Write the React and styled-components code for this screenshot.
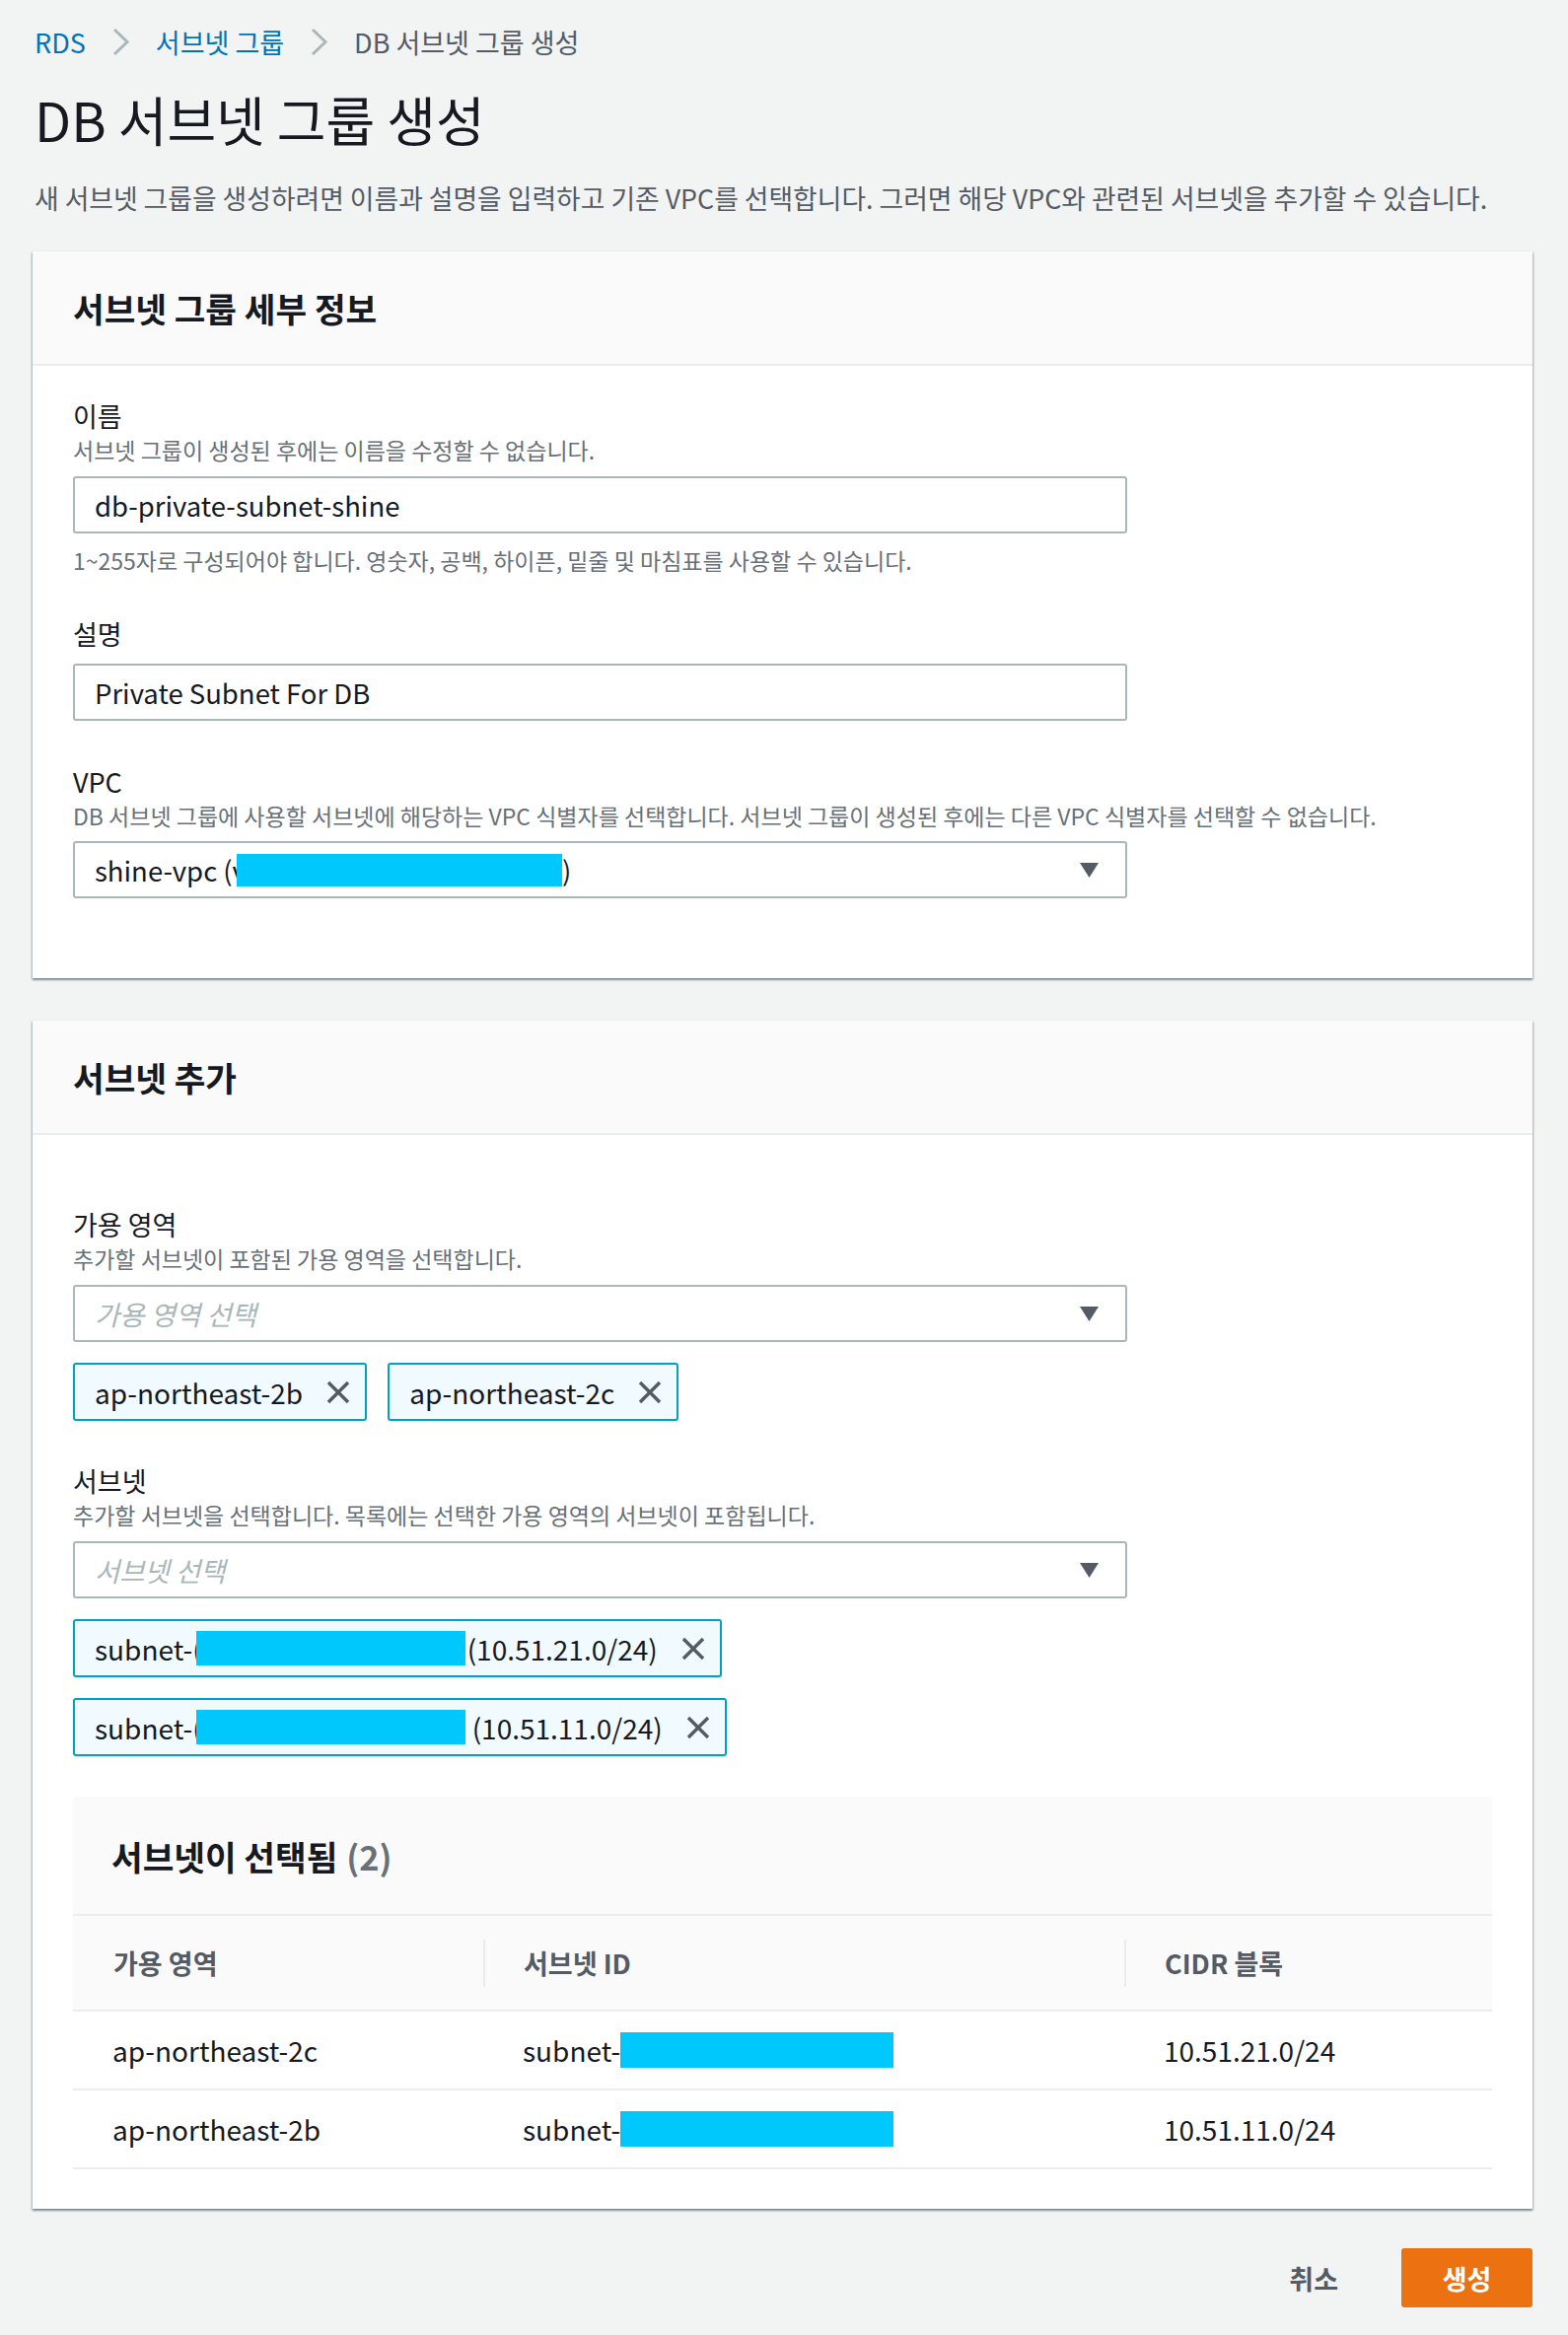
import React from 'react';
import styled, { createGlobalStyle } from 'styled-components';

const GlobalStyle = createGlobalStyle`
  html, body {
    margin: 0;
    padding: 0;
    background: #f2f3f3;
  }
  body {
    font-family: "Noto Sans CJK KR", "Noto Sans", sans-serif;
    color: #16191f;
  }
`;

const Page = styled.div`
  padding: 0 36px 27px 33px;
`;

const Breadcrumbs = styled.nav`
  height: 84px;
  display: flex;
  align-items: center;
  gap: 26px;
  padding-left: 2px;
  font-size: 27px;
`;

const Crumb = styled.span`
  color: ${({ $current }) => ($current ? '#545b64' : '#0073bb')};
`;

const Title = styled.h1`
  margin: 7px 0 0 2px;
  font-size: 54px;
  font-weight: 400;
  line-height: 60px;
`;

const PageDesc = styled.p`
  margin: 32px 0 0 2px;
  font-size: 26.8px;
  line-height: 36px;
  color: #545b64;
`;

const Panel = styled.section`
  margin-top: ${({ $top }) => $top}px;
  background: #fff;
  box-shadow: 0 2px 2px 0 rgba(0, 28, 36, 0.35), 1px 1px 2px 0 rgba(0, 28, 36, 0.18),
    -1px 1px 2px 0 rgba(0, 28, 36, 0.18);
`;

const PanelHeader = styled.header`
  box-sizing: border-box;
  height: 116px;
  display: flex;
  align-items: center;
  padding: 0 41px;
  background: #fafafa;
  border-bottom: 2px solid #eaeded;
`;

const PanelTitle = styled.h2`
  margin: 0;
  font-size: 34.4px;
  font-weight: 700;
  color: #16191f;
`;

const PanelBody = styled.div`
  padding: ${({ $top }) => $top}px 41px ${({ $bottom }) => $bottom}px;
`;

const Field = styled.div`
  margin-top: ${({ $top }) => $top || 0}px;
`;

const Label = styled.div`
  font-size: 27px;
  line-height: 34px;
  color: #16191f;
`;

const Help = styled.div`
  font-size: 23px;
  line-height: 34px;
  color: #687078;
  margin-top: ${({ $top }) => $top || 0}px;
`;

const Control = styled.div`
  box-sizing: border-box;
  width: 1069px;
  height: 58px;
  margin-top: ${({ $top }) => $top}px;
  display: flex;
  align-items: center;
  justify-content: space-between;
  padding: 0 27px 0 20px;
  border: 2px solid #aab7b8;
  border-radius: 3px;
  background: #fff;
  font-size: 27.5px;
  color: #16191f;
`;

const Value = styled.span`
  display: inline-flex;
  align-items: center;
  white-space: nowrap;
`;

const Placeholder = styled.span`
  font-style: italic;
  color: #aab7b8;
`;

const Redact = styled.span`
  display: inline-block;
  width: ${({ $w }) => $w}px;
  height: ${({ $h }) => $h}px;
  margin-left: ${({ $ml }) => $ml || 0}px;
  margin-right: ${({ $mr }) => $mr || 0}px;
  background: #00c8fc;
`;

const TokenRow = styled.div`
  margin-top: 21px;
  display: flex;
  gap: 21px;
`;

const TokenStack = styled.div`
  margin-top: 21px;
  display: flex;
  flex-direction: column;
  align-items: flex-start;
  gap: 21px;
`;

const Token = styled.div`
  box-sizing: border-box;
  height: 59px;
  display: inline-flex;
  align-items: center;
  gap: 23px;
  padding: 0 14px 0 20px;
  border: 2px solid #00a1c9;
  border-radius: 3px;
  background: #f1faff;
  font-size: 28px;
  color: #16191f;
  white-space: nowrap;
`;

const Table = styled.div`
  margin-top: 41px;
`;

const TableHead = styled.div`
  box-sizing: border-box;
  height: 119px;
  display: flex;
  align-items: center;
  padding-left: 39px;
  background: #fafafa;
  font-size: 34.4px;
  font-weight: 700;
`;

const Count = styled.span`
  margin-left: 9px;
  color: #687078;
`;

const Row = styled.div`
  box-sizing: border-box;
  display: grid;
  grid-template-columns: 416px 650px 1fr;
  height: ${({ $h }) => $h}px;
  border-top: ${({ $head }) => ($head ? '2px solid #eaeded' : 'none')};
  border-bottom: 2px solid #eaeded;
  background: ${({ $head }) => ($head ? '#fafafa' : '#fff')};
`;

const HeadCell = styled.div`
  position: relative;
  display: flex;
  align-items: center;
  padding-left: 41px;
  font-size: 27px;
  font-weight: 700;
  color: #545b64;

  &:not(:first-child)::before {
    content: '';
    position: absolute;
    left: 0;
    top: 24px;
    height: 48px;
    width: 2px;
    background: #eaeded;
  }
`;

const Cell = styled.div`
  display: flex;
  align-items: center;
  padding-left: 40px;
  font-size: 28px;
  color: #16191f;
  white-space: nowrap;
`;

const Footer = styled.div`
  margin-top: 40px;
  display: flex;
  justify-content: flex-end;
  align-items: center;
  gap: 40px;
`;

const Button = styled.button`
  box-sizing: border-box;
  height: 60px;
  padding: 0 ${({ $primary }) => ($primary ? 37 : 24)}px;
  min-width: ${({ $primary }) => ($primary ? 133 : 0)}px;
  border: none;
  border-radius: 3px;
  background: ${({ $primary }) => ($primary ? '#ec7211' : 'transparent')};
  color: ${({ $primary }) => ($primary ? '#fff' : '#545b64')};
  font-family: inherit;
  font-size: 27px;
  font-weight: 700;
`;

const Chevron = () => (
  <svg width="19" height="29" viewBox="0 0 19 29">
    <path d="M3 2 L16 14.5 L3 27" fill="none" stroke="#aab7b8" strokeWidth="3" />
  </svg>
);

const Caret = () => (
  <svg width="19" height="15" viewBox="0 0 19 15">
    <polygon points="0,0 19,0 9.5,15" fill="#545b64" />
  </svg>
);

const Dismiss = () => (
  <svg width="26" height="26" viewBox="0 0 26 26">
    <path d="M3 3 L23 23 M23 3 L3 23" stroke="#545b64" strokeWidth="3.4" />
  </svg>
);

const subnets = [
  { az: 'ap-northeast-2c', cidr: '10.51.21.0/24' },
  { az: 'ap-northeast-2b', cidr: '10.51.11.0/24' },
];

export default function App() {
  return (
    <>
      <GlobalStyle />
      <Page>
        <Breadcrumbs>
          <Crumb>RDS</Crumb>
          <Chevron />
          <Crumb>서브넷 그룹</Crumb>
          <Chevron />
          <Crumb $current>DB 서브넷 그룹 생성</Crumb>
        </Breadcrumbs>

        <Title>DB 서브넷 그룹 생성</Title>
        <PageDesc>
          새 서브넷 그룹을 생성하려면 이름과 설명을 입력하고 기존 VPC를 선택합니다. 그러면 해당 VPC와 관련된 서브넷을 추가할 수 있습니다.
        </PageDesc>

        <Panel $top={36}>
          <PanelHeader>
            <PanelTitle>서브넷 그룹 세부 정보</PanelTitle>
          </PanelHeader>
          <PanelBody $top={34} $bottom={81}>
            <Field>
              <Label>이름</Label>
              <Help>서브넷 그룹이 생성된 후에는 이름을 수정할 수 없습니다.</Help>
              <Control $top={10}>
                <Value>db-private-subnet-shine</Value>
              </Control>
              <Help $top={10}>1~255자로 구성되어야 합니다. 영숫자, 공백, 하이픈, 밑줄 및 마침표를 사용할 수 있습니다.</Help>
            </Field>
            <Field $top={41}>
              <Label>설명</Label>
              <Control $top={13}>
                <Value>Private Subnet For DB</Value>
              </Control>
            </Field>
            <Field $top={45}>
              <Label>VPC</Label>
              <Help>DB 서브넷 그룹에 사용할 서브넷에 해당하는 VPC 식별자를 선택합니다. 서브넷 그룹이 생성된 후에는 다른 VPC 식별자를 선택할 수 없습니다.</Help>
              <Control $top={9}>
                <Value>
                  shine-vpc (v<Redact $w={330} $h={33} $ml={-10} />)
                </Value>
                <Caret />
              </Control>
            </Field>
          </PanelBody>
        </Panel>

        <Panel $top={43}>
          <PanelHeader>
            <PanelTitle>서브넷 추가</PanelTitle>
          </PanelHeader>
          <PanelBody $top={74} $bottom={40}>
            <Field>
              <Label>가용 영역</Label>
              <Help>추가할 서브넷이 포함된 가용 영역을 선택합니다.</Help>
              <Control $top={10}>
                <Placeholder>가용 영역 선택</Placeholder>
                <Caret />
              </Control>
              <TokenRow>
                <Token>
                  ap-northeast-2b
                  <Dismiss />
                </Token>
                <Token>
                  ap-northeast-2c
                  <Dismiss />
                </Token>
              </TokenRow>
            </Field>
            <Field $top={44}>
              <Label>서브넷</Label>
              <Help>추가할 서브넷을 선택합니다. 목록에는 선택한 가용 영역의 서브넷이 포함됩니다.</Help>
              <Control $top={10}>
                <Placeholder>서브넷 선택</Placeholder>
                <Caret />
              </Control>
              <TokenStack>
                {subnets.map((s, i) => (
                  <Token key={s.cidr}>
                    <Value>
                      subnet-(<Redact $w={273} $h={35} $ml={-6} $mr={i === 0 ? 2 : 7} />({s.cidr})
                    </Value>
                    <Dismiss />
                  </Token>
                ))}
              </TokenStack>
            </Field>

            <Table>
              <TableHead>
                서브넷이 선택됨<Count>(2)</Count>
              </TableHead>
              <Row $head $h={99}>
                <HeadCell>가용 영역</HeadCell>
                <HeadCell>서브넷 ID</HeadCell>
                <HeadCell>CIDR 블록</HeadCell>
              </Row>
              {subnets.map((s) => (
                <Row key={s.az} $h={80}>
                  <Cell>{s.az}</Cell>
                  <Cell>
                    subnet-
                    <Redact $w={277} $h={36} />
                  </Cell>
                  <Cell>{s.cidr}</Cell>
                </Row>
              ))}
            </Table>
          </PanelBody>
        </Panel>

        <Footer>
          <Button>취소</Button>
          <Button $primary>생성</Button>
        </Footer>
      </Page>
    </>
  );
}
